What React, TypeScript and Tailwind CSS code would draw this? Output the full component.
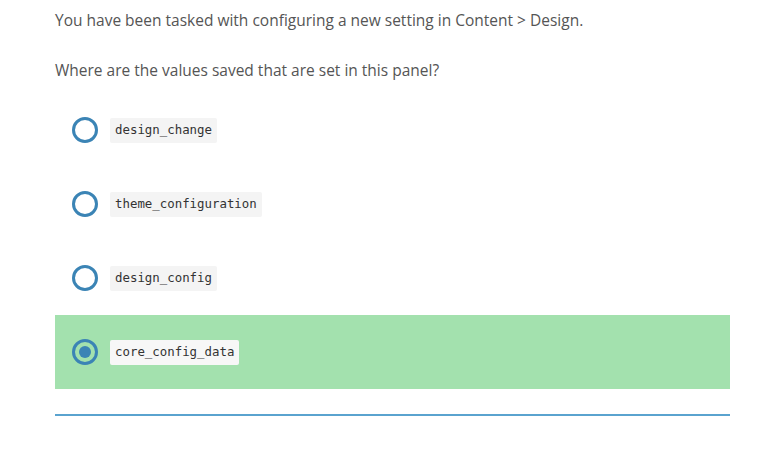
import React from "react";

const options = [
  { label: "design_change", selected: false },
  { label: "theme_configuration", selected: false },
  { label: "design_config", selected: false },
  { label: "core_config_data", selected: true },
];

export default function App() {
  return (
    <div className="w-[759px] h-[449px] bg-white overflow-hidden">
      <div className="ml-[55px] w-[675px] pt-[10px]">
        <p className="text-[15.5px] leading-[20px] text-[#555555]" style={{ fontFamily: "'Open Sans', sans-serif" }}>
          You have been tasked with configuring a new setting in Content &gt; Design.
        </p>
        <p className="mt-[30px] text-[15.5px] leading-[20px] text-[#555555]" style={{ fontFamily: "'Open Sans', sans-serif" }}>
          Where are the values saved that are set in this panel?
        </p>
        <div className="mt-[13px] flex flex-col">
          {options.map((o) => (
            <div
              key={o.label}
              className={`h-[74px] flex items-center pl-[17px] ${o.selected ? "bg-[#a3e1ae]" : ""}`}
            >
              <div className="w-[26px] h-[26px] rounded-full border-[3px] border-[#3b84b5] flex items-center justify-center">
                {o.selected && <div className="w-[12px] h-[12px] rounded-full bg-[#3b84b5]" />}
              </div>
              <span
                className={`ml-[12px] h-[25px] px-[5px] flex items-center text-[12.4px] text-[#333333] rounded-[2px] ${o.selected ? "bg-[#f7f7f7]" : "bg-[#f4f4f4]"}`}
                style={{ fontFamily: "'DejaVu Sans Mono', 'Liberation Mono', monospace" }}
              >
                {o.label}
              </span>
            </div>
          ))}
        </div>
        <div className="mt-[25px] h-[2px] bg-[#5aa3cf]" />
      </div>
    </div>
  );
}
